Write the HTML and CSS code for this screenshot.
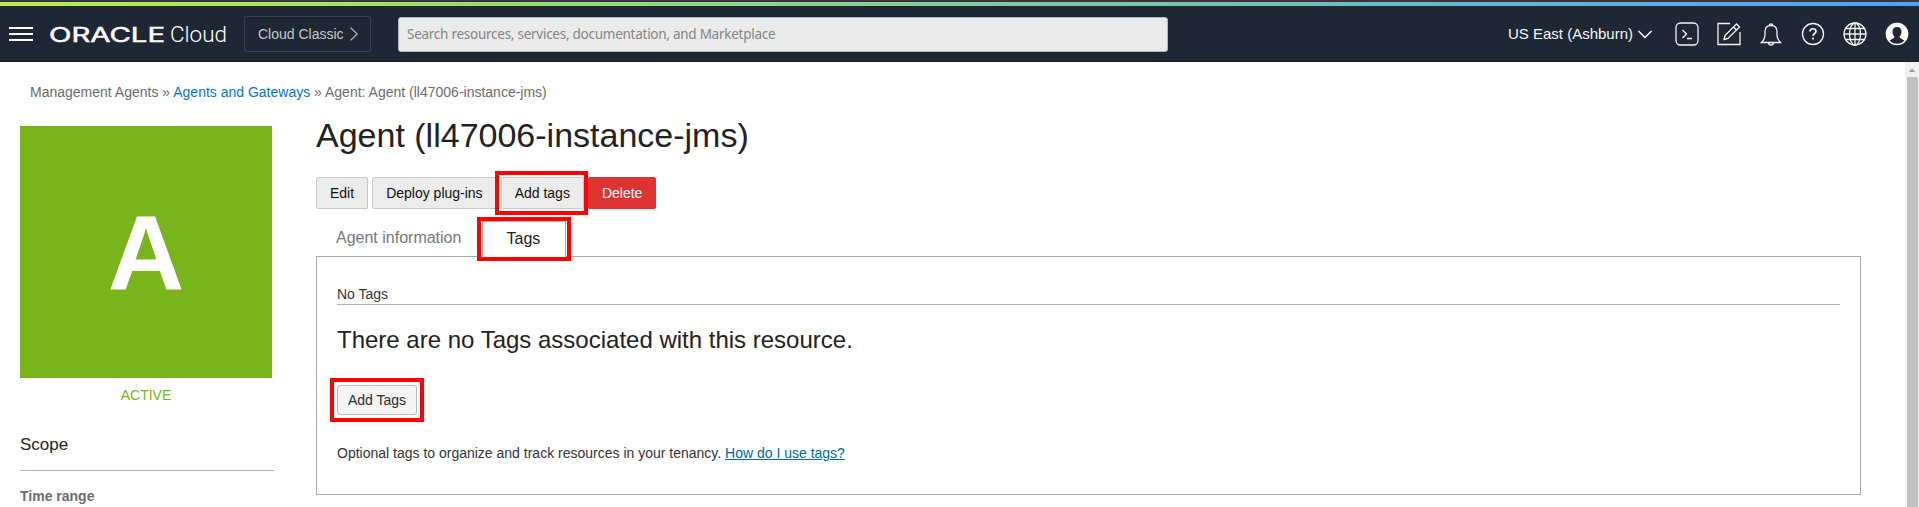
FILE: index.html
```html
<!DOCTYPE html>
<html lang="en">
<head>
<meta charset="utf-8">
<title>Agent (ll47006-instance-jms)</title>
<link rel="stylesheet" href="styles.css">
</head>
<body>
<div class="accent"></div>
<header class="topbar">
  <svg class="menu" width="24" height="14" viewBox="0 0 24 14"><path d="M0 1h24M0 7h24M0 13h24" stroke="#fff" stroke-width="2"/></svg>
  <svg class="brand" width="180" height="40" viewBox="0 0 180 40">
    <text class="brand-oracle" x="0" y="28" textLength="116" lengthAdjust="spacingAndGlyphs">ORACLE</text>
    <text class="brand-cloud" x="121" y="28" textLength="57" lengthAdjust="spacingAndGlyphs">Cloud</text>
  </svg>
  <a class="classic">Cloud Classic
    <svg width="8" height="14" viewBox="0 0 8 14"><path d="M.6.6 7.200 7 .6 13.400" fill="none" stroke="#c4c7ca" stroke-width="1.200"/></svg>
  </a>
  <div class="search"><span>Search resources, services, documentation, and Marketplace</span></div>
  <div class="region">US East (Ashburn)
    <svg width="14" height="9" viewBox="0 0 14 9"><path d="M.5 1 7 7.500 13.500 1" fill="none" stroke="#fff" stroke-width="1.400"/></svg>
  </div>
  <nav class="icons">
    <svg width="24" height="24" viewBox="0 0 24 24"><rect x="1" y="1" width="22" height="22" rx="4.500"/><path d="M7.500 8 11.500 12l-4 4M12 16.500h5"/></svg>
    <svg width="24" height="24" viewBox="0 0 24 24"><path d="M13 1.500H1v21h22V10"/><path d="M7 17.500 8 13.500 19.500 2 22.500 5 11 16.500ZM16.500 5 19.500 8"/></svg>
    <svg width="24" height="24" viewBox="0 0 24 24"><path d="M2.500 20.500c2-2 3.500-3.500 3.500-8V9.500C6 5.500 8.500 3.500 12 3.500s6 2 6 6v3c0 4.500 1.500 6 3.500 8ZM10.300 3.500a1.700 1.700 0 1 1 3.400 0M9.500 20.500a2.500 2.500 0 0 0 5 0"/></svg>
    <svg width="24" height="24" viewBox="0 0 24 24"><circle cx="12" cy="12" r="10.500"/><path d="M9 9.500C9 5.800 15 5.800 15 9.500c0 2-3 2-3 4.500M12 15.500v2" stroke-width="1.700"/></svg>
    <svg width="24" height="24" viewBox="0 0 24 24"><circle cx="12" cy="12" r="11"/><ellipse cx="12" cy="12" rx="5.500" ry="11"/><path d="M1 12h22M3 6.500h18M3 17.500h18M12 1v22"/></svg>
    <svg width="24" height="24" viewBox="0 0 24 24"><circle class="solid" cx="12" cy="12" r="10.700"/><path class="person" d="M12 5c3 0 4.500 2 4.500 4.800 0 2.200-.8 3.700-1.800 4.700v1.300l4.700 2.700A10 10 0 0 1 4.600 18.500L9.300 15.800v-1.300c-1-1-1.800-2.500-1.800-4.700C7.500 7 9 5 12 5Z"/></svg>
  </nav>
</header>
<div class="viewport">
  <main class="page">
    <div class="crumbs">Management Agents » <a>Agents and Gateways</a> » Agent: Agent (ll47006-instance-jms)</div>
    <div class="columns">
      <aside class="side">
        <div class="tile">A</div>
        <div class="status">ACTIVE</div>
        <h2 class="scope">Scope</h2>
        <div class="range">Time range</div>
      </aside>
      <section class="content">
        <h1 class="title">Agent (ll47006-instance-jms)</h1>
        <div class="actions">
          <button class="btn">Edit</button>
          <button class="btn">Deploy plug-ins</button>
          <button class="btn marked mark-action">Add tags</button>
          <button class="btn danger">Delete</button>
        </div>
        <div class="tabs">
          <a class="tab">Agent information</a>
          <a class="tab active marked mark-tab">Tags</a>
        </div>
        <div class="panel">
          <div class="count">No Tags</div>
          <h3 class="empty">There are no Tags associated with this resource.</h3>
          <button class="add marked mark-add">Add Tags</button>
          <p class="hint">Optional tags to organize and track resources in your tenancy. <a>How do I use tags?</a></p>
        </div>
      </section>
    </div>
  </main>
  <div class="scrollbar">
    <svg width="14" height="15" viewBox="0 0 14 15"><path d="M3.500 10 7 6.500 10.500 10Z" fill="#a3a3a3"/></svg>
    <div class="thumb"></div>
  </div>
</div>
</body>
</html>
```
FILE: styles.css
```css
* { box-sizing: border-box; }
body {
  margin: 0;
  height: 507px;
  overflow: hidden;
  display: flex;
  flex-direction: column;
  background: #fff;
  color: #222;
  font: 14px/20px "Liberation Sans", Arial, sans-serif;
}
h1, h2, h3, p { margin: 0; font-weight: 400; }
button { font: inherit; margin: 0; }

.accent {
  flex: none;
  height: 6px;
  border-top: 2px solid #383636;
  background: linear-gradient(90deg, #b8ec51, #7cc4ae 60%, #509ffd) border-box;
  background-clip: padding-box;
}
.topbar {
  flex: none;
  height: 56px;
  display: flex;
  align-items: center;
  padding: 0 10px 0 9px;
  background: #1e2733;
  box-shadow: inset 0 -1px #161d2c;
}
.menu { margin-right: 16px; }
.brand { margin-right: 15px; fill: #fff; }
.brand-oracle { font: 400 19.500px Inter, sans-serif; stroke: #fff; stroke-width: 0.500px; }
.brand-cloud { font: 300 22px Roboto, sans-serif; }
.classic {
  width: 127px;
  height: 36px;
  padding: 0 0 0 13px;
  display: flex;
  align-items: center;
  gap: 6px;
  border: 1px solid #38404c;
  border-radius: 2px;
  color: #c4c7ca;
}
.search {
  width: 770px;
  height: 35px;
  margin-left: 27px;
  padding-left: 8px;
  display: flex;
  align-items: center;
  border: 1px solid #aeb6be;
  border-radius: 3px;
  background: #ebebeb;
  color: #858585;
  font: 13.500px/20px "Noto Sans", sans-serif;
  letter-spacing: -0.260px;
  white-space: nowrap;
}
.region {
  margin-left: auto;
  display: flex;
  align-items: center;
  gap: 5px;
  color: #f4f5f5;
  font-size: 15px;
}
.icons { display: flex; gap: 18px; margin-left: 23px; }
.icons svg { fill: none; stroke: #f2f2f2; stroke-width: 1.300; }
.icons .solid { fill: #fff; stroke: #fff; }
.icons .person { fill: #1e2733; stroke: none; }

.viewport { flex: 1; min-height: 0; display: flex; }
.page { flex: 1; min-width: 0; overflow: hidden; }
.scrollbar {
  width: 14px;
  display: flex;
  flex-direction: column;
  background: #f1f1f1;
}
.thumb { flex: 1; margin: 0 1px 0 2px; background: #c1c1c1; }

.crumbs { padding: 20px 0 0 30px; height: 54px; color: #6b6b6b; }
.crumbs a { color: #0572ce; }
.columns { display: flex; padding-left: 20px; gap: 42px; }

.side { width: 254px; padding-top: 10px; }
.tile {
  width: 252px;
  height: 252px;
  padding-top: 1px;
  background: #78b41a;
  color: #fff;
  font-weight: 700;
  font-size: 106px;
  line-height: 252px;
  text-align: center;
}
.status { width: 252px; margin-top: 7px; text-align: center; color: #78b41a; }
.scope {
  height: 66px;
  padding-top: 30px;
  border-bottom: 1px solid #aeb4c4;
  font-size: 17px;
  line-height: 20px;
}
.range { margin-top: 15px; font-weight: 700; color: #6b6b6b; }

.content { width: 1545px; }
.title { height: 61px; font-size: 34px; line-height: 38px; }
.actions { display: flex; gap: 4px; }
.btn {
  height: 32px;
  padding: 0 13px;
  border: 1px solid #c8c8c8;
  border-radius: 2px;
  background: #ececec;
  color: #111;
}
.danger { border-color: #df3333; background: #df3333; color: #fff; }
.marked { position: relative; }
.marked::after {
  content: "";
  position: absolute;
  border: 4px solid #f00;
}
.mark-action::after { inset: -7px -5px -7px -7px; }
.mark-tab::after { inset: -5px -6px -4px; }
.mark-add::after { inset: -8px; }

.tabs { display: flex; height: 47px; padding: 12px 0 0 20px; font-size: 16px; }
.tab { padding-top: 7px; color: #777; }
.active {
  width: 84px;
  height: 36px;
  margin-left: 21px;
  padding-right: 2px;
  border: 1px solid #aaa;
  border-bottom: 0;
  background: #fff;
  color: #222;
  text-align: center;
}
.panel { height: 239px; padding: 27px 20px 0; border: 1px solid #aaa; }
.count { height: 21px; border-bottom: 1px solid #aab4bd; color: #333; }
.empty { margin-top: 20px; font-size: 24px; line-height: 30px; }
.add {
  display: block;
  width: 80px;
  height: 30px;
  margin-top: 30px;
  padding: 0;
  border: 1px solid #b3b8c3;
  border-radius: 3px;
  background: #f4f4f4;
  color: #2b2b2b;
}
.hint { margin-top: 28px; color: #333; }
.hint a { color: #0067a3; text-decoration: underline; }
```
